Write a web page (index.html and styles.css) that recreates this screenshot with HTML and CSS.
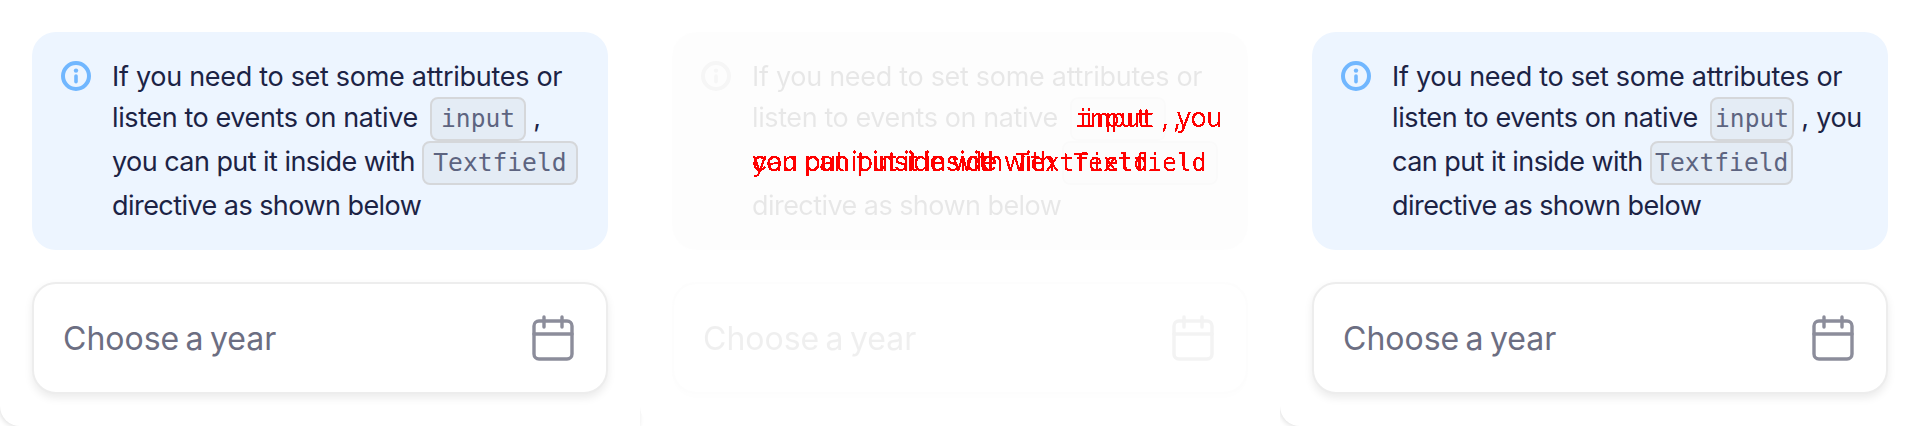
FILE: index.html
```html
<!DOCTYPE html>
<html lang="en">
<head>
<meta charset="utf-8">
<title>Textfield</title>
<link rel="stylesheet" href="styles.css">
</head>
<body>
<svg class="defs" aria-hidden="true"><filter id="crisp" color-interpolation-filters="sRGB"><feComponentTransfer><feFuncA type="discrete" tableValues="0 1"/></feComponentTransfer></filter></svg>
<div class="stage">
  <section class="panel">
    <div class="alert">
      <svg class="info" viewBox="0 0 30 30" width="30" height="30"><circle cx="15" cy="15" r="13" fill="none" stroke="#71b7ff" stroke-width="4"/><circle cx="15" cy="9.6" r="2.2" fill="#71b7ff"/><rect x="13.2" y="13.2" width="3.6" height="9.4" rx="1.8" fill="#71b7ff"/></svg>
      <p class="msg">If you need to set some attributes or <span class="near">listen to events on native</span> <code class="code">input</code> , <span class="snug">you can put it inside with</span> <code class="code">Textfield</code> <span class="snug">directive as shown below</span></p>
    </div>
    <div class="field">
      <span class="ph">Choose a year</span>
      <svg class="cal" viewBox="0 0 42 46" width="42" height="46"><rect x="2" y="6" width="38" height="38" rx="5" fill="none" stroke="#8c8d9b" stroke-width="3.4"/><path d="M2 19h38M12 2v10M30 2v10" fill="none" stroke="#8c8d9b" stroke-width="3.4" stroke-linecap="round"/></svg>
    </div>
  </section>
  <section class="panel diff">
    <div class="faded">
      <div class="alert">
        <svg class="info" viewBox="0 0 30 30" width="30" height="30"><circle cx="15" cy="15" r="13" fill="none" stroke="#71b7ff" stroke-width="4"/><circle cx="15" cy="9.6" r="2.2" fill="#71b7ff"/><rect x="13.2" y="13.2" width="3.6" height="9.4" rx="1.8" fill="#71b7ff"/></svg>
        <p class="msg">If you need to set some attributes or <span class="near">listen to events on native</span> <code class="code">input</code> , <span class="snug">you can put it inside with</span> <code class="code">Textfield</code> <span class="snug">directive as shown below</span></p>
      </div>
      <div class="field">
        <span class="ph">Choose a year</span>
        <svg class="cal" viewBox="0 0 42 46" width="42" height="46"><rect x="2" y="6" width="38" height="38" rx="5" fill="none" stroke="#8c8d9b" stroke-width="3.4"/><path d="M2 19h38M12 2v10M30 2v10" fill="none" stroke="#8c8d9b" stroke-width="3.4" stroke-linecap="round"/></svg>
      </div>
    </div>
    <div class="alert overlay">
      <span class="slot"></span>
      <p class="msg">If you need to set some attributes or <span class="near">listen to events on native</span> <code class="code red">input</code> <span class="red">,</span> <span class="snug red">you can put it inside with</span> <code class="code red">Textfield</code> <span class="snug">directive as shown below</span></p>
    </div>
    <div class="alert overlay">
      <span class="slot"></span>
      <p class="msg">If you need to set some attributes or <span class="near">listen to events on native</span> <code class="code tight red">input</code> <span class="red">, you</span> <span class="snug red">can put it inside with</span> <code class="code tight red">Textfield</code> <span class="snug">directive as shown below</span></p>
    </div>
  </section>
  <section class="panel">
    <div class="alert">
      <svg class="info" viewBox="0 0 30 30" width="30" height="30"><circle cx="15" cy="15" r="13" fill="none" stroke="#71b7ff" stroke-width="4"/><circle cx="15" cy="9.6" r="2.2" fill="#71b7ff"/><rect x="13.2" y="13.2" width="3.6" height="9.4" rx="1.8" fill="#71b7ff"/></svg>
      <p class="msg">If you need to set some attributes or <span class="near">listen to events on native</span> <code class="code tight">input</code> , you <span class="snug">can put it inside with</span> <code class="code tight">Textfield</code> <span class="snug">directive as shown below</span></p>
    </div>
    <div class="field">
      <span class="ph">Choose a year</span>
      <svg class="cal" viewBox="0 0 42 46" width="42" height="46"><rect x="2" y="6" width="38" height="38" rx="5" fill="none" stroke="#8c8d9b" stroke-width="3.4"/><path d="M2 19h38M12 2v10M30 2v10" fill="none" stroke="#8c8d9b" stroke-width="3.4" stroke-linecap="round"/></svg>
    </div>
  </section>
</div>
</body>
</html>
```
FILE: styles.css
```css
html, body { margin: 0; padding: 0; background: #fff; }
.defs { position: absolute; width: 0; height: 0; }
.stage { display: grid; grid-template-columns: repeat(3, 640px); height: 426px; overflow: hidden; }
.panel { background: #fff; padding: 32px; height: 426px; border-radius: 0 0 0 20px; box-sizing: border-box; box-shadow: -1px 1px 5px rgba(0,0,0,0.12); font-family: "Inter", "Liberation Sans", sans-serif; }
.diff { position: relative; box-shadow: none; }
.faded { filter: grayscale(1); opacity: 0.1; }
.alert { display: flex; gap: 21px; background: #edf5ff; border-radius: 24px; padding: 24px 24px 0 29px; height: 218px; box-sizing: border-box; }
.info { flex: none; margin-top: 5px; }
.msg { margin: 0; font-size: 27px; line-height: 41px; letter-spacing: -0.3px; color: #1c2345; }
.near { letter-spacing: -0.4px; margin-right: 5px; }
.snug { letter-spacing: -0.55px; }
.code { display: inline-block; font-family: "DejaVu Sans Mono", monospace; font-size: 24.6px; line-height: 40px; letter-spacing: 0; padding: 0 9px; color: #5d6480; background: #e4ecf5; border: 2px solid #d5d7da; border-radius: 8px; }
.tight { padding: 0 3px; }
.field { display: flex; align-items: center; justify-content: space-between; margin-top: 32px; height: 112px; box-sizing: border-box; padding: 0 32px 0 29px; background: #fff; border: 2px solid #ededed; border-radius: 24px; box-shadow: 0 4px 8px rgba(0,0,0,0.08); }
.ph { font-size: 32px; letter-spacing: 0; word-spacing: -2.6px; color: #6c6e82; }
.overlay { position: absolute; top: 32px; left: 32px; width: 576px; background: none; filter: url(#crisp); }
.overlay .msg, .overlay .code { color: transparent; background: none; border-color: transparent; }
.slot { flex: none; width: 30px; }
.overlay .red { color: #f00; }
```
